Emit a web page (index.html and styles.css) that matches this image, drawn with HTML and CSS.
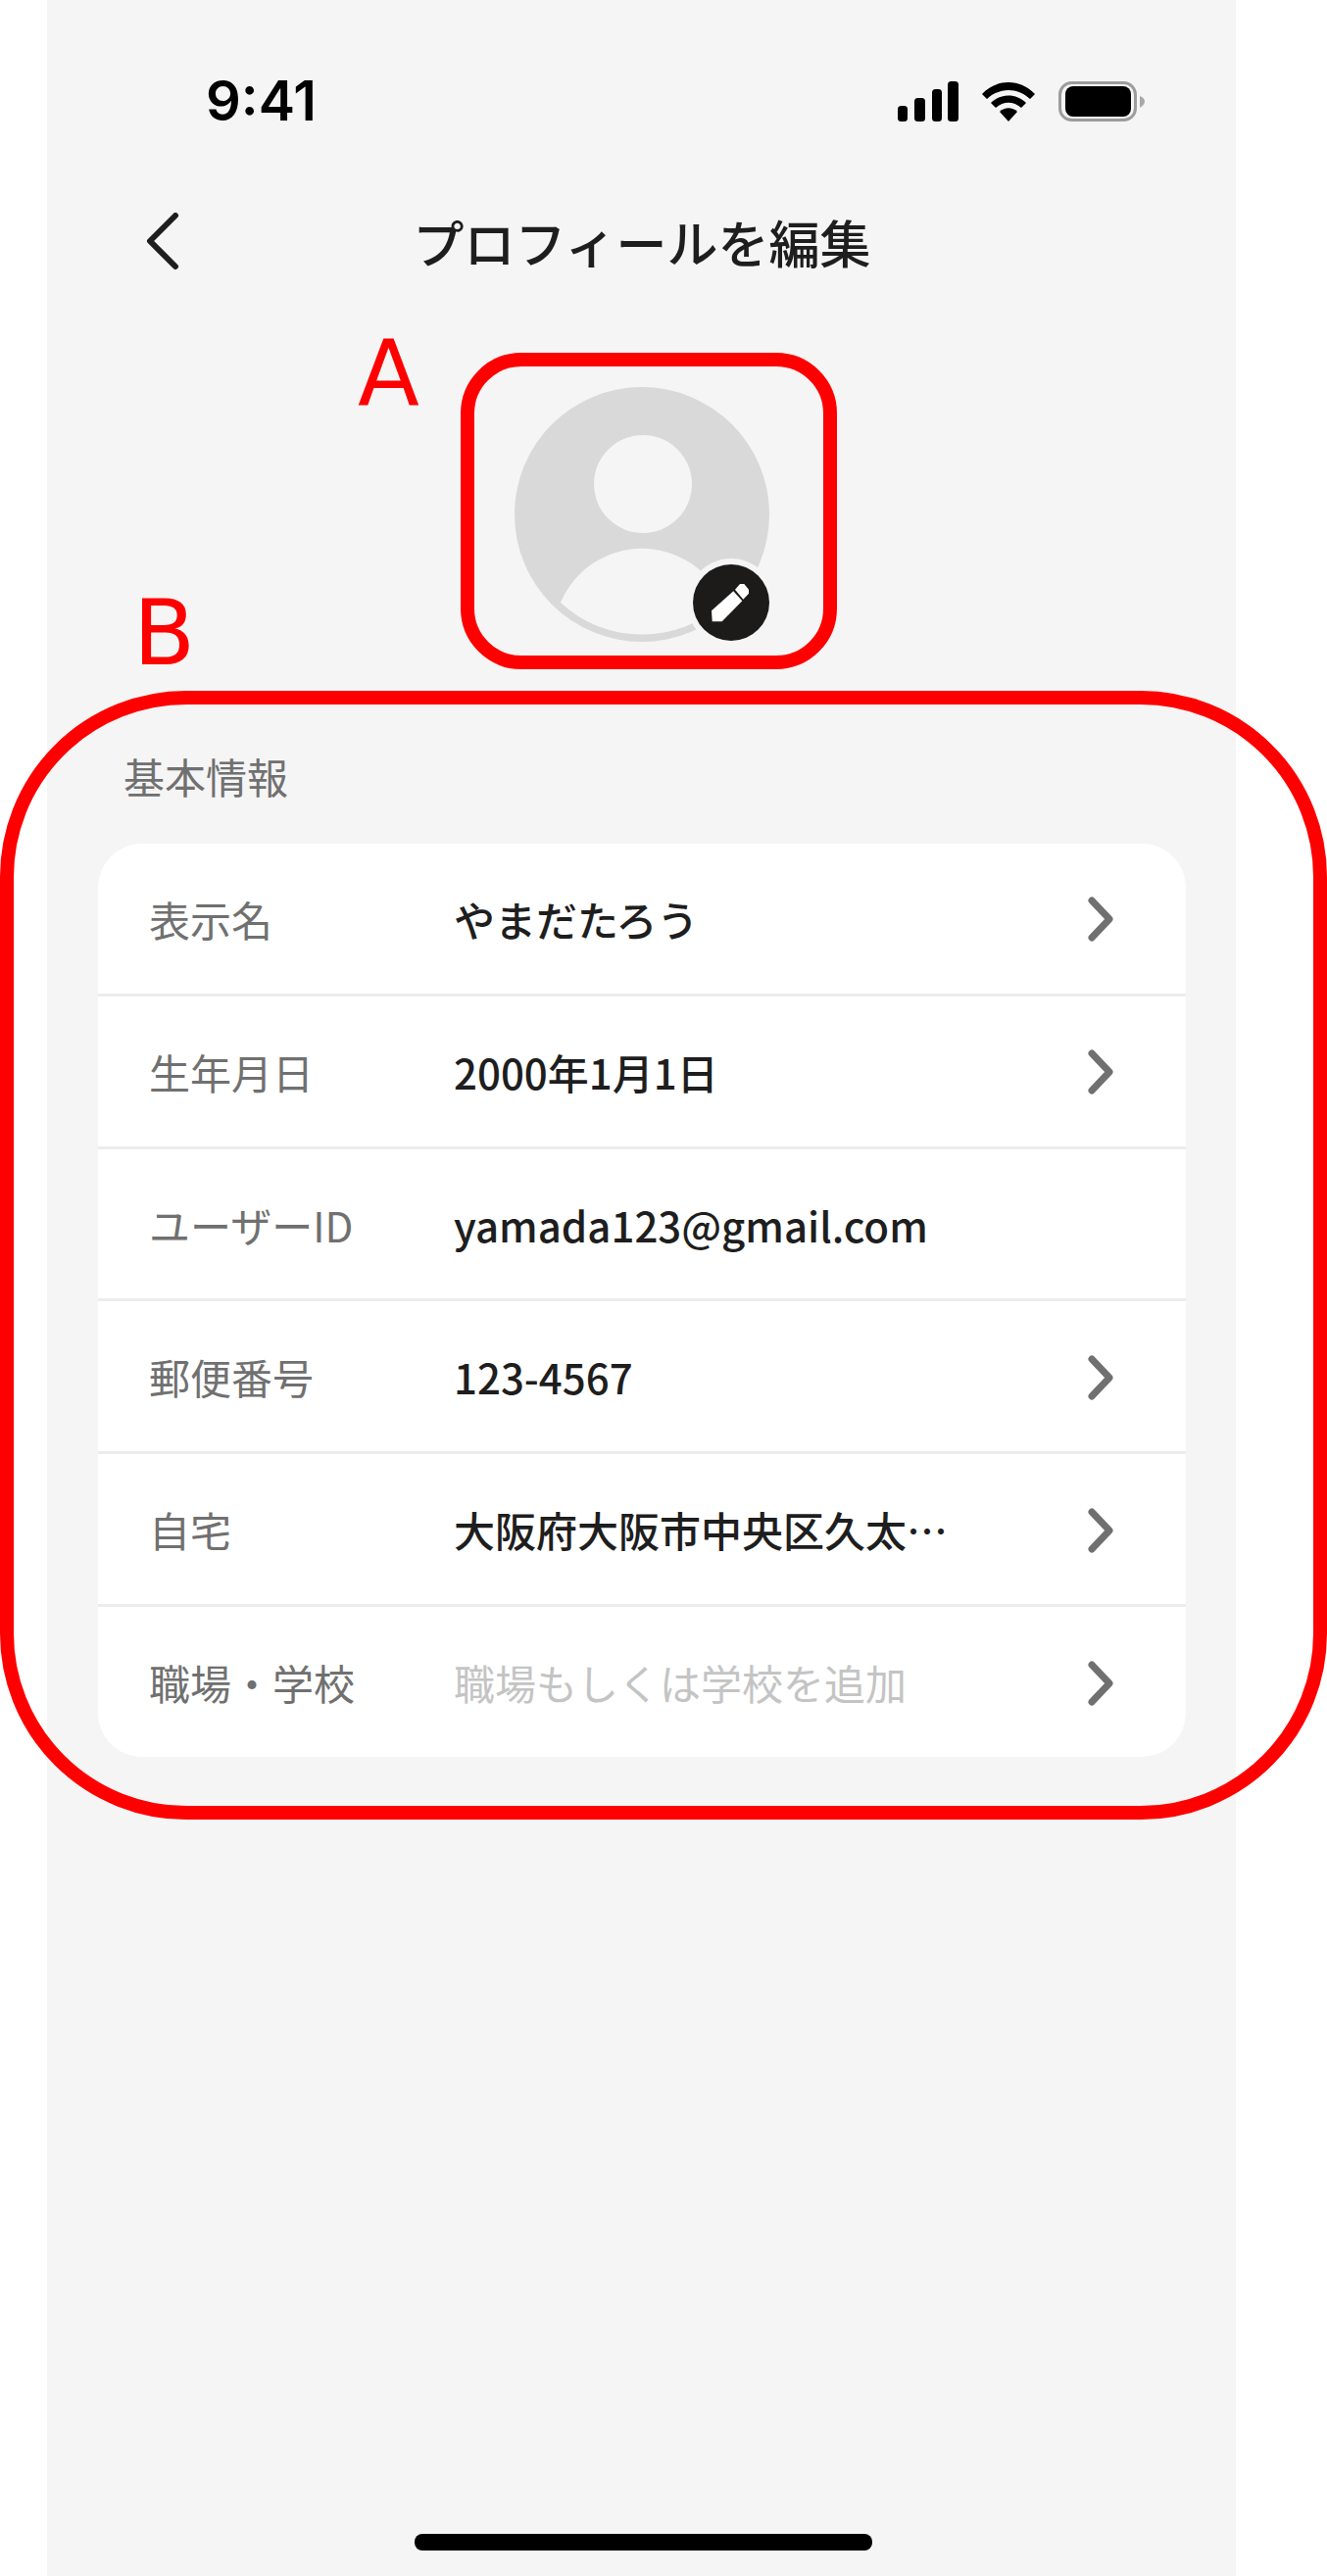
FILE: index.html
```html
<!DOCTYPE html>
<html lang="ja">
<head>
  <meta charset="UTF-8">
  <meta name="viewport" content="width=device-width, initial-scale=1.0">
  <title>プロフィールを編集</title>
  <link rel="stylesheet" href="styles.css">
</head>
<body>
  <div class="screen">
    <!-- status bar -->
    <div class="status">
      <span class="time">9:41</span>
      <div class="status-icons">
        <svg width="62" height="41" viewBox="0 0 62 41">
          <rect x="0" y="25" width="10" height="16" rx="3.5"/>
          <rect x="17" y="17" width="11" height="24" rx="3.5"/>
          <rect x="35" y="8" width="10" height="33" rx="3.5"/>
          <rect x="51" y="0" width="11" height="41" rx="3.5"/>
        </svg>
        <svg width="56" height="41" viewBox="0 0 56 41">
          <path d="M1 13 C16 -3 40 -3 55 13 L50 18 C37 6 19 6 6 18 Z"/>
          <path d="M10 22 C20 12 36 12 46 22 L41 27 C33 20 23 20 15 27 Z"/>
          <path d="M19 31 C24 26 32 26 37 31 L28 41 Z"/>
        </svg>
        <svg width="88" height="41" viewBox="0 0 88 41">
          <rect x="1.5" y="1.5" width="77" height="38" rx="12" fill="none" stroke="#9c9c9c" stroke-width="3"/>
          <rect x="7" y="5" width="67" height="31" rx="8"/>
          <path d="M83 15 C86 16 88 18 88 20.500 C88 23 86 25 83 27 Z" fill="#a8a8a8"/>
        </svg>
      </div>
    </div>

    <!-- nav -->
    <div class="nav">
      <svg class="back" width="36" height="60" viewBox="0 0 36 60">
        <path d="M31 3 L5 29 L31 55" fill="none" stroke="#1e1e1e" stroke-width="6" stroke-linecap="round" stroke-linejoin="round"/>
      </svg>
      <h1 class="nav-title">プロフィールを編集</h1>
    </div>

    <!-- avatar -->
    <div class="avatar">
      <svg width="262" height="262" viewBox="0 0 262 262">
        <circle cx="130" cy="130" r="130" fill="#d9d9d9"/>
        <circle cx="131" cy="99" r="50" fill="#f5f5f5"/>
        <path d="M47 220 A90 90 0 0 1 213 220 A122 122 0 0 1 47 220 Z" fill="#f5f5f5"/>
        <circle cx="221" cy="220" r="45" fill="#f5f5f5"/>
        <circle cx="221" cy="220" r="39" fill="#1d1a1a"/>
        <path d="M201 228.300 L223.300 208.300 L232.300 218.300 L211.700 239.300 L201.700 239.300 Z" fill="#fff"/>
        <path d="M225 206.700 L230 201 L234.300 201 L239 206.700 L239 210.700 L233.300 216.700 Z" fill="#fff"/>
      </svg>
    </div>

    <!-- basic info -->
    <h2 class="section-title">基本情報</h2>
    <div class="card">
      <div class="row">
        <span class="row-label">表示名</span>
        <span class="row-value">やまだたろう</span>
        <svg class="chevron" width="26" height="46" viewBox="0 0 26 46"><path d="M4 4 L22 23 L4 42"/></svg>
      </div>
      <div class="row">
        <span class="row-label">生年月日</span>
        <span class="row-value">2000年1月1日</span>
        <svg class="chevron" width="26" height="46" viewBox="0 0 26 46"><path d="M4 4 L22 23 L4 42"/></svg>
      </div>
      <div class="row">
        <span class="row-label">ユーザーID</span>
        <span class="row-value">yamada123@gmail.com</span>
      </div>
      <div class="row">
        <span class="row-label">郵便番号</span>
        <span class="row-value">123-4567</span>
        <svg class="chevron" width="26" height="46" viewBox="0 0 26 46"><path d="M4 4 L22 23 L4 42"/></svg>
      </div>
      <div class="row">
        <span class="row-label">自宅</span>
        <span class="row-value">大阪府大阪市中央区久太…</span>
        <svg class="chevron" width="26" height="46" viewBox="0 0 26 46"><path d="M4 4 L22 23 L4 42"/></svg>
      </div>
      <div class="row">
        <span class="row-label">職場・学校</span>
        <span class="row-value row-value-empty">職場もしくは学校を追加</span>
        <svg class="chevron" width="26" height="46" viewBox="0 0 26 46"><path d="M4 4 L22 23 L4 42"/></svg>
      </div>
    </div>

    <div class="home-bar"></div>
  </div>

  <!-- red annotations on top of the screenshot -->
  <div class="mark mark-a"></div>
  <div class="mark mark-b"></div>
  <span class="mark-letter letter-a">A</span>
  <span class="mark-letter letter-b">B</span>
</body>
</html>
```

FILE: styles.css
```css
*{margin: 0;padding: 0;box-sizing: border-box;}
html,body{background: #fff;}
body{position: relative;width: 1354px;height: 2629px;overflow: hidden;font-family: "Noto Sans CJK JP", "Noto Sans", sans-serif;}

.screen{display: flex;flex-direction: column;width: 1213px;height: 2629px;margin-left: 48px;background: #f5f5f5;}

.status{display: flex;justify-content: space-between;align-items: flex-end;padding: 83px 93px 0 162px;}
.time{font-family: Inter, sans-serif;font-size: 56px;font-weight: 600;line-height: 41px;color: #000;}
.status-icons{display: flex;gap: 23px;}
.status-icons svg{display: block;}

.nav{position: relative;display: flex;align-items: center;justify-content: center;height: 90px;margin-top: 79px;padding: 0 0 3px 1px;}
.back{position: absolute;left: 100px;top: 14px;}
.nav-title{font-size: 52px;font-weight: 500;line-height: 87px;color: #1e1e1e;}

.avatar{height: 260px;margin: 102px 0 0 477px;}
.avatar svg{display: block;overflow: visible;}

.section-title{margin: 107px 0 39px 78px;font-size: 42px;font-weight: 400;line-height: 60px;color: #707070;}

.card{display: flex;flex-direction: column;width: 1110px;height: 932px;margin-left: 52px;background: #fff;border-radius: 45px;overflow: hidden;}
.row{display: flex;flex: 1;align-items: center;padding: 1px 74px 0 52px;border-bottom: 3px solid #ececec;}
.row:last-child{border-bottom: 0;}
.row-label{width: 311px;font-size: 42px;font-weight: 400;line-height: 60px;color: #707070;}
.row-value{flex: 1;font-size: 42px;font-weight: 500;line-height: 60px;color: #1e1e1e;}
.row-value-empty{font-weight: 400;color: #c4c4c4;}
.chevron{margin-top: 1px;fill: none;stroke: #707070;stroke-width: 7;stroke-linecap: round;stroke-linejoin: round;}

.home-bar{width: 467px;height: 17px;margin: auto 0 26px 375px;background: #000;border-radius: 8px;}

.mark{position: absolute;border: 14px solid #f00;}
.mark-a{left: 470px;top: 360px;width: 384px;height: 323px;border-radius: 62px;}
.mark-b{left: 0;top: 705px;width: 1354px;height: 1152px;border-radius: 190px;}
.mark-letter{position: absolute;font-family: "DejaVu Sans", sans-serif;font-size: 92px;line-height: 1;color: #f00;}
.letter-a{left: 365px;top: 336px;}
.letter-b{left: 136px;top: 601px;}
```
